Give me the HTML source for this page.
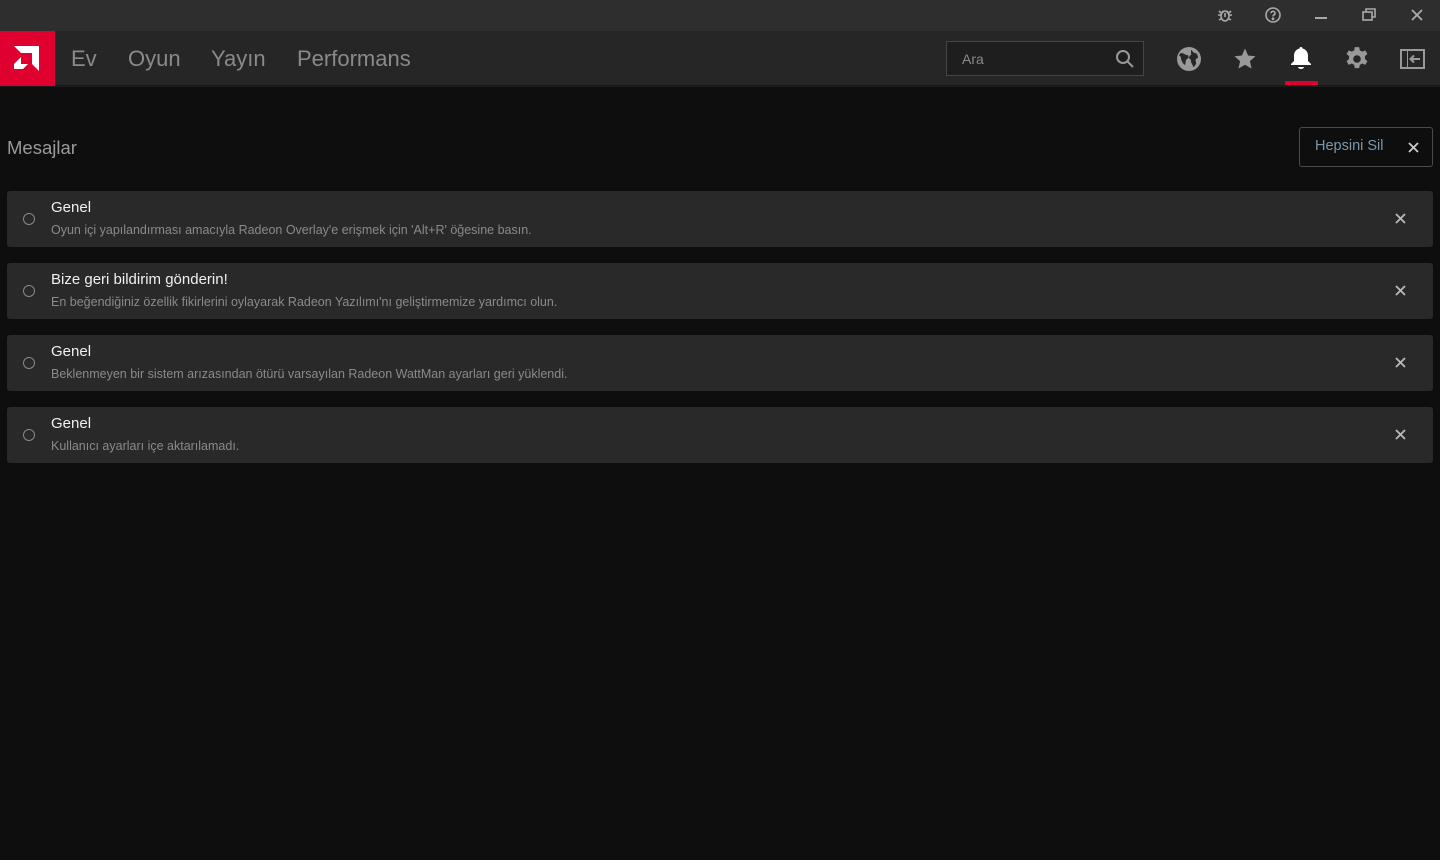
<!DOCTYPE html><html><head><meta charset="utf-8"><style>
body{margin:0;width:1440px;height:860px;background:#0e0e0e;font-family:"Liberation Sans Narrow","Liberation Sans",sans-serif;overflow:hidden;position:relative}
.tb{position:absolute;left:0;top:0;width:1440px;height:31px;background:#2e2e2e}
.nav{position:absolute;left:0;top:31px;width:1440px;height:54px;background:#262626;border-bottom:2px solid #1b1b1b}
.logo{position:absolute;left:0;top:31px;width:55px;height:55px;background:#e0002f}
.nl{position:absolute;top:46px;font-size:22px;color:#8a8a8a}
.search{position:absolute;left:946px;top:41px;width:198px;height:35px;border:1.5px solid #454545;background:#1e1e1e;box-sizing:border-box}
.card{position:absolute;left:7px;width:1426px;height:56px;background:#292929;border-radius:3px}
.card .c{position:absolute;left:16px;top:22px;width:10px;height:10px;border:1.3px solid #888;border-radius:50%}
.card .t{position:absolute;left:44px;top:8px;font-size:15px;color:#f0f0f0}
.card .s{position:absolute;left:44px;top:32px;font-size:12.5px;color:#8a8a8a}
.card svg{position:absolute;left:1388px;top:22px}
</style></head><body>
<div class="tb"></div>
<svg style="position:absolute;left:1216px;top:6px" width="18" height="18" viewBox="0 0 18 18" fill="none" stroke="#aaa" stroke-width="1.6"><ellipse cx="9" cy="10" rx="4" ry="5"/><path d="M6 5l1.5 1.5M12 5l-1.5 1.5M2 9h3M13 9h3M3 14l2.5-1.5M15 14l-2.5-1.5M3 5l2 2M15 5l-2 2M9 7v4"/></svg>
<svg style="position:absolute;left:1264px;top:6px" width="18" height="18" viewBox="0 0 18 18" fill="none" stroke="#aaa" stroke-width="1.6"><circle cx="9" cy="9" r="7"/><path d="M7 7.2a2 2 0 1 1 2.5 2c-.5.2-.5.6-.5 1.3"/><circle cx="9" cy="12.8" r=".6" fill="#aaa"/></svg>
<div style="position:absolute;left:1315px;top:17px;width:12px;height:2px;background:#aaa"></div>
<svg style="position:absolute;left:1361px;top:7px" width="16" height="16" viewBox="0 0 16 16" fill="none" stroke="#aaa" stroke-width="1.6"><rect x="2" y="5" width="9" height="8"/><path d="M5 5V2h9v8h-3"/></svg>
<svg style="position:absolute;left:1410px;top:8px" width="14" height="14" viewBox="0 0 14 14" stroke="#aaa" stroke-width="1.8"><path d="M2 2l10 10M12 2L2 12"/></svg>
<div class="nav"></div>
<div class="logo"><svg style="position:absolute;left:14px;top:15px" width="25" height="25" viewBox="0 0 25 25" fill="#fff"><path d="M0 0h25v25l-7-7V7H7z"/><path d="M7 11v7h7l-5 5H0V18z"/></svg></div>
<div class="nl" style="left:71px">Ev</div><div class="nl" style="left:128px">Oyun</div><div class="nl" style="left:211px">Yayın</div><div class="nl" style="left:297px">Performans</div>
<div class="search"><span style="position:absolute;left:15px;top:9px;font-size:14px;color:#8a8a8a">Ara</span>
<svg style="position:absolute;left:168px;top:7px" width="19" height="19" viewBox="0 0 19 19" fill="none" stroke="#999" stroke-width="2"><circle cx="8" cy="8" r="6"/><path d="M12.5 12.5L18 18"/></svg></div>
<svg style="position:absolute;left:1177px;top:47px" width="24" height="24" viewBox="0 0 24 24"><circle cx="12" cy="12" r="12" fill="#999"/><path d="M4 6c3 0 4 2 6 2s2 3 0 4-1 4-2 6c-2-1-4-5-4-7s-2-2-2-3zM14 3c2 1 2 3 4 3s3 3 3 5c-2 0-3 2-2 4s-2 5-3 5c0-3-2-3-2-6s-3-2-2-4 3-2 2-4z" fill="#262626"/></svg>
<svg style="position:absolute;left:1233px;top:47px" width="24" height="24" viewBox="0 0 24 24" fill="#999"><path d="M12 1.5l3.1 7 7.4.7-5.6 5 1.7 7.4L12 17.7l-6.6 3.9 1.7-7.4-5.6-5 7.4-.7z"/></svg>
<svg style="position:absolute;left:1289px;top:46px" width="24" height="26" viewBox="0 0 24 26" fill="#fff"><path d="M12 1c-1 0-1.6.8-1.6 1.6C6.5 3.5 5 6.5 5 10v5l-3 3v1h20v-1l-3-3v-5c0-3.5-1.5-6.5-5.4-7.4C13.6 1.8 13 1 12 1z"/><path d="M9 21h6a3 2 0 0 1-6 0z"/></svg>
<div style="position:absolute;left:1285px;top:81px;width:33px;height:4px;background:#e0002f"></div>
<svg style="position:absolute;left:1344px;top:46px" width="26" height="26" viewBox="0 0 24 24" fill="#999"><path fill-rule="evenodd" d="M10 1h4l.6 3 2.2 1.2 2.8-1.2 2 3.4-2.3 2a7 7 0 0 1 0 2.6l2.3 2-2 3.4-2.8-1.2-2.2 1.2-.6 3h-4l-.6-3-2.2-1.2-2.8 1.2-2-3.4 2.3-2a7 7 0 0 1 0-2.6l-2.3-2 2-3.4 2.8 1.2L9.4 4zM12 8.5a3.5 3.5 0 1 0 0 7 3.5 3.5 0 0 0 0-7z"/></svg>
<svg style="position:absolute;left:1400px;top:49px" width="25" height="20" viewBox="0 0 25 20"><rect width="25" height="20" fill="#999"/><rect x="2" y="2" width="5" height="16" fill="#262626"/><rect x="8" y="2" width="15" height="16" fill="#262626"/><path d="M20 10h-9M14 6.5L10.5 10 14 13.5" stroke="#999" stroke-width="2" fill="none"/></svg>
<div style="position:absolute;left:7px;top:137px;font-size:18.5px;color:#9a9a9a">Mesajlar</div>
<div style="position:absolute;left:1299px;top:127px;width:134px;height:40px;border:1.5px solid #4a4a4a;border-radius:3px;box-sizing:border-box">
<span style="position:absolute;left:15px;top:10px;font-size:14.5px;color:#7b97ad">Hepsini Sil</span>
<svg style="position:absolute;left:108px;top:14px" width="11" height="11" viewBox="0 0 11 11" stroke="#ccc" stroke-width="1.8"><path d="M1 1l9 9M10 1L1 10"/></svg></div>
<div class="card" style="top:191px"><div class="c"></div><div class="t">Genel</div><div class="s">Oyun içi yapılandırması amacıyla Radeon Overlay'e erişmek için 'Alt+R' öğesine basın.</div><svg width="11" height="11" viewBox="0 0 11 11" stroke="#bbb" stroke-width="1.8"><path d="M1 1l9 9M10 1L1 10"/></svg></div>
<div class="card" style="top:263px"><div class="c"></div><div class="t">Bize geri bildirim gönderin!</div><div class="s">En beğendiğiniz özellik fikirlerini oylayarak Radeon Yazılımı'nı geliştirmemize yardımcı olun.</div><svg width="11" height="11" viewBox="0 0 11 11" stroke="#bbb" stroke-width="1.8"><path d="M1 1l9 9M10 1L1 10"/></svg></div>
<div class="card" style="top:335px"><div class="c"></div><div class="t">Genel</div><div class="s">Beklenmeyen bir sistem arızasından ötürü varsayılan Radeon WattMan ayarları geri yüklendi.</div><svg width="11" height="11" viewBox="0 0 11 11" stroke="#bbb" stroke-width="1.8"><path d="M1 1l9 9M10 1L1 10"/></svg></div>
<div class="card" style="top:407px"><div class="c"></div><div class="t">Genel</div><div class="s">Kullanıcı ayarları içe aktarılamadı.</div><svg width="11" height="11" viewBox="0 0 11 11" stroke="#bbb" stroke-width="1.8"><path d="M1 1l9 9M10 1L1 10"/></svg></div>
</body></html>
